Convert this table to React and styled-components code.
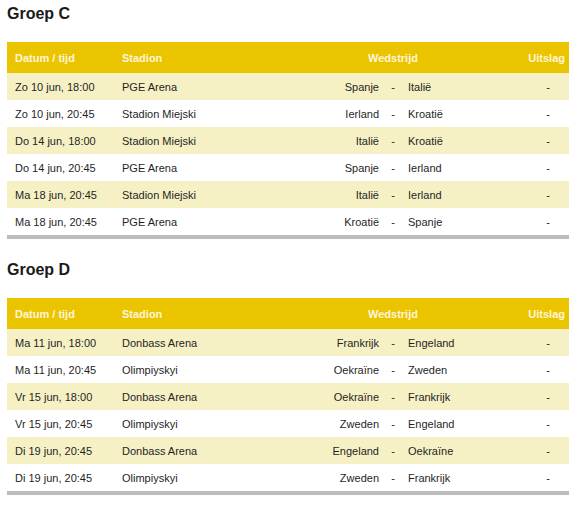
import React from "react";
import styled, { createGlobalStyle } from "styled-components";

const GlobalStyle = createGlobalStyle`
  body {
    margin: 0;
    background: #fff;
    font-family: "Liberation Sans", Arial, sans-serif;
    color: #1f1f1f;
  }
`;

const Page = styled.div`
  padding: 4px 15px 0 7px;
  display: flex;
  flex-direction: column;
  gap: 21px;
`;

const Section = styled.section`
  display: flex;
  flex-direction: column;
`;

const Title = styled.h2`
  margin: 0 0 18px;
  font-size: 16px;
  line-height: 20px;
  font-weight: bold;
  color: #1a1a1a;
`;

const Table = styled.table`
  width: 562px;
  border-collapse: separate;
  border-spacing: 0;
  table-layout: fixed;
  font-size: 11px;
  border-bottom: 4px solid #bdbdbd;
`;

const HeadRow = styled.tr`
  background: #ebc400;
  height: 31px;
`;

const Th = styled.th`
  padding: 0 ${(p) => (p.$pr != null ? p.$pr : 4)}px 0 ${(p) => (p.$pl != null ? p.$pl : 8)}px;
  text-align: ${(p) => p.$align || "left"};
  font-weight: bold;
  color: #fff6d8;
  white-space: nowrap;
`;

const Row = styled.tr`
  height: 27px;
  background: ${(p) => (p.$alt ? "#f6f1c5" : "#ffffff")};
`;

const Td = styled.td`
  padding: 0 ${(p) => (p.$pr != null ? p.$pr : 4)}px 0 ${(p) => (p.$pl != null ? p.$pl : 8)}px;
  text-align: ${(p) => p.$align || "left"};
  white-space: nowrap;
`;

const groups = [
  {
    name: "Groep C",
    matches: [
      ["Zo 10 jun, 18:00", "PGE Arena", "Spanje", "Italië"],
      ["Zo 10 jun, 20:45", "Stadion Miejski", "Ierland", "Kroatië"],
      ["Do 14 jun, 18:00", "Stadion Miejski", "Italië", "Kroatië"],
      ["Do 14 jun, 20:45", "PGE Arena", "Spanje", "Ierland"],
      ["Ma 18 jun, 20:45", "Stadion Miejski", "Italië", "Ierland"],
      ["Ma 18 jun, 20:45", "PGE Arena", "Kroatië", "Spanje"],
    ],
  },
  {
    name: "Groep D",
    matches: [
      ["Ma 11 jun, 18:00", "Donbass Arena", "Frankrijk", "Engeland"],
      ["Ma 11 jun, 20:45", "Olimpiyskyi", "Oekraïne", "Zweden"],
      ["Vr 15 jun, 18:00", "Donbass Arena", "Oekraïne", "Frankrijk"],
      ["Vr 15 jun, 20:45", "Olimpiyskyi", "Zweden", "Engeland"],
      ["Di 19 jun, 20:45", "Donbass Arena", "Engeland", "Oekraïne"],
      ["Di 19 jun, 20:45", "Olimpiyskyi", "Zweden", "Frankrijk"],
    ],
  },
];

const GroupTable = ({ group }) => (
  <Section>
    <Title>{group.name}</Title>
    <Table>
      <colgroup>
        <col style={{ width: 107 }} />
        <col style={{ width: 186 }} />
        <col style={{ width: 83 }} />
        <col style={{ width: 20 }} />
        <col style={{ width: 83 }} />
        <col style={{ width: 83 }} />
      </colgroup>
      <thead>
        <HeadRow>
          <Th>Datum / tijd</Th>
          <Th>Stadion</Th>
          <Th colSpan={3} $align="center" $pl={0} $pr={0}>
            Wedstrijd
          </Th>
          <Th $align="right" $pr={4}>
            Uitslag
          </Th>
        </HeadRow>
      </thead>
      <tbody>
        {group.matches.map((m, i) => (
          <Row key={i} $alt={i % 2 === 0}>
            <Td>{m[0]}</Td>
            <Td>{m[1]}</Td>
            <Td $align="right" $pl={0} $pr={4}>
              {m[2]}
            </Td>
            <Td $align="center" $pl={0} $pr={0}>
              -
            </Td>
            <Td $pl={5}>{m[3]}</Td>
            <Td $align="right" $pr={19}>
              -
            </Td>
          </Row>
        ))}
      </tbody>
    </Table>
  </Section>
);

export default function App() {
  return (
    <>
      <GlobalStyle />
      <Page>
        {groups.map((g) => (
          <GroupTable key={g.name} group={g} />
        ))}
      </Page>
    </>
  );
}
